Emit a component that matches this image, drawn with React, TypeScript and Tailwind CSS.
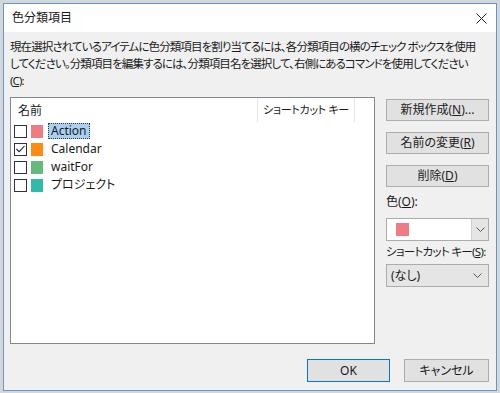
import React from "react";

const categories = [
  { name: "Action", color: "#ef7b84", checked: false, selected: true },
  { name: "Calendar", color: "#ff8c12", checked: true, selected: false },
  { name: "waitFor", color: "#63ba7c", checked: false, selected: false },
  { name: "プロジェクト", color: "#2fbaa9", checked: false, selected: false },
];

const Chevron = () => (
  <svg width="9" height="6" viewBox="0 0 9 6" className="text-[#5a5a5a]">
    <path d="M0.5 0.5 L4.5 4.5 L8.5 0.5" fill="none" stroke="currentColor" strokeWidth="1" />
  </svg>
);

const Checkbox = ({ checked }: { checked: boolean }) => (
  <div className="w-[13px] h-[13px] border border-[#333] bg-white flex items-center justify-center">
    {checked && (
      <svg width="9" height="8" viewBox="0 0 9 8">
        <path d="M0.5 4 L3.2 6.7 L8.5 1" fill="none" stroke="#222" strokeWidth="1.1" />
      </svg>
    )}
  </div>
);

const Button = ({ children, className = "" }: { children: React.ReactNode; className?: string }) => (
  <button className={"h-[22px] bg-[#e1e1e1] border border-[#adadad] text-[12px] text-[#222] flex items-center justify-center " + className}>
    {children}
  </button>
);

const App = () => {
  return (
    <div
      className="w-[500px] h-[393px] bg-[#d6d6d6] pt-[3px] pl-[3px] text-[#1a1a1a] [font-feature-settings:'palt']"
      style={{ fontFamily: '"Noto Sans", "Noto Sans CJK JP", sans-serif' }}
    >
      <div className="w-[494px] h-[388px] border border-[#5b9bd5] flex flex-col">
        {/* title bar */}
        <div className="h-[28px] bg-white flex items-center justify-between pl-[8px] pr-[9px]">
          <span className="text-[12px]">色分類項目</span>
          <svg width="11" height="11" viewBox="0 0 11 11">
            <path d="M0.5 0.5 L10.5 10.5 M10.5 0.5 L0.5 10.5" stroke="#222" strokeWidth="1" />
          </svg>
        </div>

        <div className="flex-1 bg-[#f0f0f0] pl-[6px] pr-[7px] pt-[6px] flex flex-col">
          <p className="text-[11.5px] leading-[17px] whitespace-nowrap tracking-[-0.9px]">
            現在選択されているアイテムに色分類項目を割り当てるには、各分類項目の横のチェック ボックスを使用
            <br />
            してください。分類項目を編集するには、分類項目名を選択して、右側にあるコマンドを使用してください
            <br />(<span className="underline">C</span>):
          </p>

          <div className="flex mt-[8px]">
            {/* list */}
            <div className="w-[365px] h-[247px] bg-white border border-[#828790] flex flex-col">
              <div className="h-[24px] flex text-[12px]">
                <div className="w-[246px] pl-[7px] flex items-center pt-[1px]">名前</div>
                <div className="w-[98px] border-l border-r border-[#e5e5e5] pl-[5px] flex items-center pt-[1px] text-[11px] tracking-[-0.3px]">
                  ショートカット キー
                </div>
              </div>
              <div className="flex flex-col">
                {categories.map((c) => (
                  <div key={c.name} className="h-[18px] flex items-center pl-[3px] text-[12px]">
                    <Checkbox checked={c.checked} />
                    <div className="w-[12px] h-[13px] ml-[4px]" style={{ backgroundColor: c.color }} />
                    <span
                      className={
                        "ml-[5px] h-[16px] px-[2px] flex items-center leading-none border " +
                        (c.selected ? "bg-[#a9cff2] border-dotted border-[#3b3b3b]" : "border-transparent")
                      }
                    >
                      {c.name}
                    </span>
                  </div>
                ))}
              </div>
            </div>

            {/* right column */}
            <div className="ml-[11px] w-[103px] flex flex-col pt-[2px]">
              <Button>
                新規作成(<span className="underline">N</span>)...
              </Button>
              <Button className="mt-[11px]">
                名前の変更(<span className="underline">R</span>)
              </Button>
              <Button className="mt-[11px]">
                削除(<span className="underline">D</span>)
              </Button>
              <div className="mt-[7px] h-[16px] text-[12px] leading-[16px]">
                色(<span className="underline">O</span>):
              </div>
              <div className="mt-[8px] h-[23px] bg-white border border-[#acacac] flex">
                <div className="flex-1 flex items-center pl-[9px]">
                  <div className="w-[13px] h-[13px] bg-[#ef7b84]" />
                </div>
                <div className="w-[17px] bg-[#e5e5e5] border-l border-[#d0d0d0] flex items-center justify-center">
                  <Chevron />
                </div>
              </div>
              <div className="mt-[3px] h-[16px] text-[11.5px] leading-[16px] whitespace-nowrap tracking-[-0.7px]">
                ショートカット キー(<span className="underline">S</span>):
              </div>
              <div className="mt-[4px] h-[23px] bg-[#e5e5e5] border border-[#acacac] flex items-center justify-between pl-[4px] pr-[6px] text-[12px]">
                <span>(なし)</span>
                <Chevron />
              </div>
            </div>
          </div>

          {/* footer */}
          <div className="mt-[15px] flex justify-end gap-[14px]">
            <button className="w-[83px] h-[23px] bg-[#e1e1e1] border border-[#0078d7] text-[12px] flex items-center justify-center">
              OK
            </button>
            <button className="w-[85px] h-[23px] bg-[#e1e1e1] border border-[#adadad] text-[12px] flex items-center justify-center">
              キャンセル
            </button>
          </div>
        </div>
      </div>
    </div>
  );
};

export default App;
